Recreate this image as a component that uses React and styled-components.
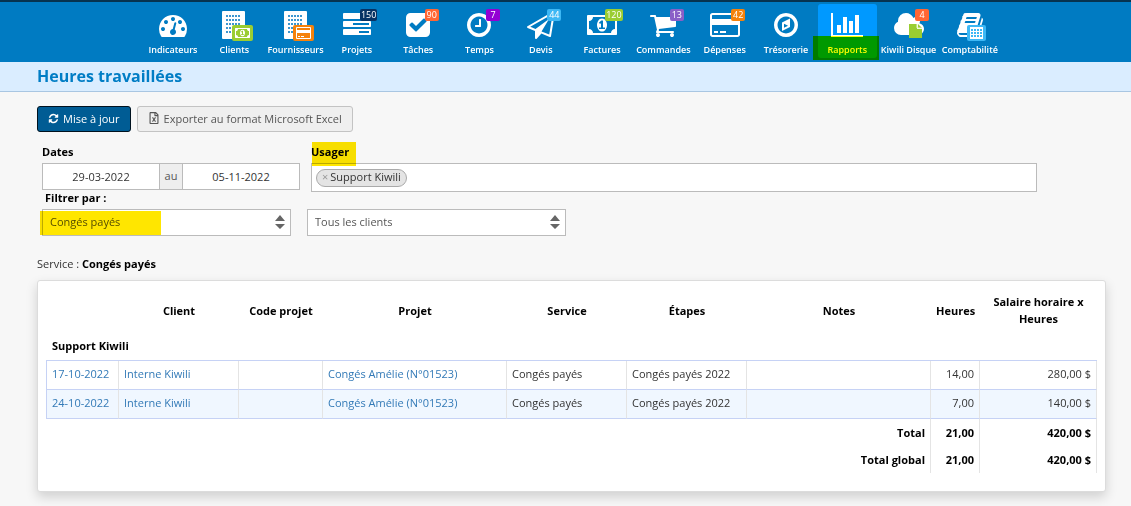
import React from "react";
import styled, { createGlobalStyle } from "styled-components";
import { FaRegFileExcel } from "react-icons/fa";

const GlobalStyle = createGlobalStyle`
  *, *::before, *::after { box-sizing: border-box; }
  body {
    margin: 0;
    background: #f7f7f7;
    color: #333;
    font: 11px/17px "Open Sans", "Noto Sans", sans-serif;
  }
  button, input, select { font: inherit; color: inherit; }
  a { color: #337ab7; text-decoration: none; }
`;

/* ---------- Glyphs ---------- */

const glyphs = {
  gauge: {
    w: 1792,
    d: "M384 1152q0-53-37.5-90.5t-90.5-37.5-90.5 37.5-37.5 90.5 37.5 90.5 90.5 37.5 90.5-37.5 37.5-90.5zm192-448q0-53-37.5-90.5t-90.5-37.5-90.5 37.5-37.5 90.5 37.5 90.5 90.5 37.5 90.5-37.5 37.5-90.5zm428 481l101-382q6-26-7.5-48.5t-38.5-29.5-48 6.5-30 39.5l-101 382q-60 5-107 43.5t-63 98.5q-20 77 20 146t117 89 146-20 89-117q16-60-6-117t-72-91zm660-33q0-53-37.5-90.5t-90.5-37.5-90.5 37.5-37.5 90.5 37.5 90.5 90.5 37.5 90.5-37.5 37.5-90.5zm-640-640q0-53-37.5-90.5t-90.5-37.5-90.5 37.5-37.5 90.5 37.5 90.5 90.5 37.5 90.5-37.5 37.5-90.5zm448 192q0-53-37.5-90.5t-90.5-37.5-90.5 37.5-37.5 90.5 37.5 90.5 90.5 37.5 90.5-37.5 37.5-90.5zm320 448q0 261-141 483-19 29-54 29h-1402q-35 0-54-29-141-221-141-483 0-182 71-348t191-286 286-191 348-71 348 71 286 191 191 286 71 348z",
  },
  tasks: {
    w: 1792,
    d: "M1024 1408h640v-128h-640v128zm-384-512h1024v-128h-1024v128zm640-512h384v-128h-384v128zm512 832v256q0 26-19 45t-45 19h-1664q-26 0-45-19t-19-45v-256q0-26 19-45t45-19h1664q26 0 45 19t19 45zm0-512v256q0 26-19 45t-45 19h-1664q-26 0-45-19t-19-45v-256q0-26 19-45t45-19h1664q26 0 45 19t19 45zm0-512v256q0 26-19 45t-45 19h-1664q-26 0-45-19t-19-45v-256q0-26 19-45t45-19h1664q26 0 45 19t19 45z",
  },
  check: {
    w: 1792,
    d: "M813 1299l614-614q19-19 19-45t-19-45l-102-102q-19-19-45-19t-45 19l-467 467-211-211q-19-19-45-19t-45 19l-102 102q-19 19-19 45t19 45l358 358q19 19 45 19t45-19zm851-883v960q0 119-84.5 203.5t-203.5 84.5h-960q-119 0-203.5-84.5t-84.5-203.5v-960q0-119 84.5-203.5t203.5-84.5h960q119 0 203.5 84.5t84.5 203.5z",
  },
  clock: {
    w: 1792,
    d: "M1024 544v448q0 14-9 23t-23 9h-320q-14 0-23-9t-9-23v-64q0-14 9-23t23-9h224v-352q0-14 9-23t23-9h64q14 0 23 9t9 23zm416 352q0-148-73-273t-198-198-273-73-273 73-198 198-73 273 73 273 198 198 273 73 273-73 198-198 73-273zm224 0q0 209-103 385.5t-279.5 279.5-385.5 103-385.5-103-279.5-279.5-103-385.5 103-385.5 279.5-279.5 385.5-103 385.5 103 279.5 279.5 103 385.5z",
  },
  plane: {
    w: 1792,
    d: "M1764 11q33 24 27 64l-256 1536q-5 29-32 45-14 8-31 8-11 0-24-5l-527-215-298 327q-18 21-47 21-14 0-23-4-19-7-30-23.5t-11-36.5v-452l-472-193q-37-14-40-55-3-39 32-59l1664-960q35-21 68 2zm-342 1499l221-1323-1434 827 336 137 863-639-478 797z",
  },
  money: {
    w: 1920,
    d: "M768 1152h384v-96h-128v-448h-114l-148 137 77 80q42-37 55-57h2v288h-128v96zm512-256q0 70-21 142t-59.5 134-101.5 101-138 39-138-39-101.5-101-59.5-134-21-142 21-142 59.5-134 101.5-101 138-39 138 39 101.5 101 59.5 134 21 142zm512 256v-512q-106 0-181-75t-75-181h-1152q0 106-75 181t-181 75v512q106 0 181 75t75 181h1152q0-106 75-181t181-75zm128-832v1152q0 26-19 45t-45 19h-1792q-26 0-45-19t-19-45v-1152q0-26 19-45t45-19h1792q26 0 45 19t19 45z",
  },
  cart: {
    w: 1792,
    d: "M704 1536q0 52-38 90t-90 38-90-38-38-90 38-90 90-38 90 38 38 90zm896 0q0 52-38 90t-90 38-90-38-38-90 38-90 90-38 90 38 38 90zm128-1088v512q0 24-16.5 42.5t-40.5 21.5l-1044 122q13 60 13 70 0 16-24 64h920q26 0 45 19t19 45-19 45-45 19h-1024q-26 0-45-19t-19-45q0-11 8-31.5t16-36 21.5-40 15.5-29.5l-177-823h-204q-26 0-45-19t-19-45 19-45 45-19h256q16 0 28.5 6.5t19.5 15.5 13 24.5 8 26 5.5 29.5 4.5 26h1201q26 0 45 19t19 45z",
  },
  card: {
    w: 1920,
    d: "M1760 128q66 0 113 47t47 113v1216q0 66-47 113t-113 47h-1600q-66 0-113-47t-47-113v-1216q0-66 47-113t113-47h1600zm-1600 128q-13 0-22.5 9.5t-9.5 22.5v224h1664v-224q0-13-9.5-22.5t-22.5-9.5h-1600zm1600 1280q13 0 22.5-9.5t9.5-22.5v-608h-1664v608q0 13 9.5 22.5t22.5 9.5h1600zm-1504-128v-128h256v128h-256zm384 0v-128h384v128h-384z",
  },
  compass: {
    w: 1792,
    d: "M768 1071l256-128-256-128v256zm384-591v542l-512 256v-542zm288 416q0-148-73-273t-198-198-273-73-273 73-198 198-73 273 73 273 198 198 273 73 273-73 198-198 73-273zm224 0q0 209-103 385.5t-279.5 279.5-385.5 103-385.5-103-279.5-279.5-103-385.5 103-385.5 279.5-279.5 385.5-103 385.5 103 279.5 279.5 103 385.5z",
  },
  chart: {
    w: 2048,
    d: "M640 896v512h-256v-512h256zm384-512v1024h-256v-1024h256zm1024 1152v128h-2048v-1536h128v1408h1920zm-640-896v768h-256v-768h256zm384-384v1152h-256v-1152h256z",
  },
  cloud: {
    w: 1920,
    d: "M1920 1152q0 159-112.5 271.5t-271.5 112.5h-1088q-185 0-316.5-131.5t-131.5-316.5q0-132 71-241.5t187-163.5q-2-28-2-43 0-212 150-362t362-150q158 0 286.5 88t187.5 230q70-62 166-62 106 0 181 75t75 181q0 75-41 138 129 30 213 134.5t84 239.5z",
  },
  book: {
    w: 1792,
    d: "M1703 478q40 57 18 129l-275 906q-19 64-76.5 107.5t-122.5 43.5h-923q-77 0-148.5-53.5t-99.5-131.5q-24-67-2-127 0-4 3-27t4-37q1-8-3-21.5t-3-19.5q2-11 8-21t16.5-23.5 16.5-23.5q23-38 45-91.5t30-91.5q3-10 .5-30t-.5-28q3-11 17-28t17-23q21-36 42-92t25-90q1-9-2.5-32t.5-28q4-13 22-30.5t22-22.5q19-26 42.5-84.5t27.5-96.5q1-8-3-25.5t-2-26.5q2-8 9-18t18-23 17-21q8-12 16.5-30.5t15-35 16-36 19.5-32 26.5-23.5 36-11.5 47.5 5.5l-1 3q38-9 51-9h761q74 0 114 56t18 130l-274 906q-36 119-71.5 153.5t-128.5 34.5h-869q-27 0-38 15-11 16-1 43 24 70 144 70h923q29 0 56-15.5t35-41.5l300-987q7-22 5-57 38 15 59 43zm-1064 2q-4 13 2 22.5t20 9.5h608q13 0 25.5-9.5t16.5-22.5l21-64q4-13-2-22.5t-20-9.5h-608q-13 0-25.5 9.5t-16.5 22.5zm-83 256q-4 13 2 22.5t20 9.5h608q13 0 25.5-9.5t16.5-22.5l21-64q4-13-2-22.5t-20-9.5h-608q-13 0-25.5 9.5t-16.5 22.5z",
  },
  refresh: {
    w: 1792,
    d: "M1639 1056q0 5-1 7-64 268-268 434.5t-478 166.5q-146 0-282.5-55t-243.5-157l-129 129q-19 19-45 19t-45-19-19-45v-448q0-26 19-45t45-19h448q26 0 45 19t19 45-19 45l-137 137q71 66 161 102t187 36q134 0 250-65t186-179q11-17 53-117 8-23 30-23h192q13 0 22.5 9.5t9.5 22.5zm25-800v448q0 26-19 45t-45 19h-448q-26 0-45-19t-19-45 19-45l138-138q-148-137-349-137-134 0-250 65t-186 179q-11 17-53 117-8 23-30 23h-199q-13 0-22.5-9.5t-9.5-22.5v-7q65-268 270-434.5t480-166.5q146 0 284 55.5t245 156.5l130-129q19-19 45-19t45 19 19 45z",
  },
};

function Glyph({ name, size }) {
  const { w, d } = glyphs[name];
  return (
    <svg width={(size * w) / 1792} height={size} viewBox={`0 0 ${w} 1792`} fill="currentColor" aria-hidden="true">
      <path fillRule="evenodd" d={d} />
    </svg>
  );
}

function Building() {
  const dots = [];
  for (let r = 0; r < 5; r++)
    for (let c = 0; c < 5; c++)
      dots.push(<rect key={`${r}-${c}`} x={6 + c * 3} y={4 + r * 4} width="2" height="2" fill="#3c96cf" />);
  return (
    <svg width="28" height="28" viewBox="0 0 28 28" aria-hidden="true">
      <rect x="2" width="23" height="28" rx="1" fill="#fff" />
      {dots}
    </svg>
  );
}

function MiniCard() {
  return (
    <svg width="15" height="12" viewBox="0 0 15 12" aria-hidden="true">
      <path fill="#fff" fillRule="evenodd" d="M1 0h13a1 1 0 0 1 1 1v10a1 1 0 0 1-1 1H1a1 1 0 0 1-1-1V1a1 1 0 0 1 1-1zM1 1v2h13V1zM1 6v5h13V6z" />
      <path fill="#fff" d="M2 9h2v1H2zM5 9h3v1H5z" />
    </svg>
  );
}

function MiniGrid() {
  return (
    <svg width="13" height="12" viewBox="0 0 13 12" aria-hidden="true">
      <path fill="#fff" fillRule="evenodd" d="M0 0h13v12H0zM1 2v2h2V2zM4 2v2h2V2zM7 2v2h2V2zM10 2v2h2V2zM1 5v2h2V5zM4 5v2h2V5zM7 5v2h2V5zM10 5v2h2V5zM1 8v2h2V8zM4 8v2h2V8zM7 8v2h2V8zM10 8v2h2V8z" />
    </svg>
  );
}

function MiniFile() {
  return (
    <svg width="13" height="14" viewBox="0 0 13 14" aria-hidden="true">
      <path fill="#9acd32" d="M0 0h8v5h5v9H0z" />
      <path fill="#9acd32" d="M9 0l4 4H9z" />
      <path fill="none" stroke="#e6f4c8" d="M8 0v4h5" />
    </svg>
  );
}

/* ---------- Top navigation ---------- */

const TopBar = styled.nav`
  background: #007bc2;
  border-top: 2px solid #06334f;
  padding: 2px 0 4px 12px;
`;

const NavList = styled.ul`
  list-style: none;
  max-width: 856px;
  margin: 0 auto;
  padding: 0;
  display: flex;
  justify-content: space-between;
`;

const NavLink = styled.a`
  position: relative;
  display: flex;
  flex-direction: column;
  align-items: center;
  width: 59px;
  height: 54px;
  padding-top: 7px;
  gap: 4px;
  border-radius: 3px;
  color: #fff;
  background: ${(p) => (p.$active ? "#0099ff" : "transparent")};
`;

const NavLabel = styled.span`
  font-size: 9px;
  line-height: 14px;
  font-weight: 600;
  white-space: nowrap;
`;

const Count = styled.span`
  position: absolute;
  top: 5px;
  right: 9px;
  min-width: 14px;
  height: 12px;
  padding: 0 1px;
  border-radius: 2px;
  background: ${(p) => p.$color};
  font-size: 9px;
  line-height: 12px;
  text-align: center;
`;

const Overlay = styled.span`
  position: absolute;
  top: ${(p) => (p.$bare ? 19 : 21)}px;
  left: ${(p) => (p.$bare ? 30 : 27)}px;
  min-width: ${(p) => (p.$bare ? 13 : 19)}px;
  height: 16px;
  padding: ${(p) => (p.$bare ? 0 : "0 3px")};
  display: flex;
  align-items: center;
  justify-content: center;
  border-radius: 2px;
  background: ${(p) => p.$color || "transparent"};
`;

const Marker = styled.span`
  position: absolute;
  top: ${(p) => p.$top}px;
  left: ${(p) => p.$left}px;
  width: ${(p) => p.$width}px;
  height: 24px;
  background: ${(p) => p.$color || "#ffe600"};
  mix-blend-mode: multiply;
  pointer-events: none;
`;

const navItems = [
  { label: "Indicateurs", icon: "gauge" },
  { label: "Clients", icon: "building", overlay: ["#9acd32", <Glyph name="money" size={14} />] },
  { label: "Fournisseurs", icon: "building", overlay: ["#f5820b", <MiniCard />] },
  { label: "Projets", icon: "tasks", count: "150", color: "#063264" },
  { label: "Tâches", icon: "check", count: "90", color: "#ff6633" },
  { label: "Temps", icon: "clock", count: "7", color: "#9400d3" },
  { label: "Devis", icon: "plane", count: "44", color: "#3db8f5" },
  { label: "Factures", icon: "money", count: "120", color: "#9acd32" },
  { label: "Commandes", icon: "cart", count: "13", color: "#8a5fc7" },
  { label: "Dépenses", icon: "card", count: "42", color: "#f5820b" },
  { label: "Trésorerie", icon: "compass" },
  { label: "Rapports", icon: "chart", active: true },
  { label: "Kiwili Disque", icon: "cloud", count: "4", color: "#ff6633", overlay: [null, <MiniFile />] },
  { label: "Comptabilité", icon: "book", overlay: ["#3db8f5", <MiniGrid />] },
];

/* ---------- Page ---------- */

const TitleBar = styled.header`
  background: #daedff;
  border-bottom: 1px solid #a9c6e2;
  padding: 0 37px;
`;

const Title = styled.h1`
  margin: 0;
  font-size: 16px;
  line-height: 29px;
  font-weight: 700;
  color: #007dc5;
`;

const Content = styled.main`
  padding: 14px 25px 14px 37px;
`;

const Actions = styled.div`
  display: flex;
  gap: 6px;
`;

const Button = styled.button`
  display: flex;
  align-items: center;
  gap: 4px;
  height: 26px;
  padding: 0 10px 2px;
  border: 1px solid ${(p) => (p.$primary ? "#00121f" : "#c3c3c3")};
  border-radius: 3px;
  background: ${(p) => (p.$primary ? "#005c94" : "#efefef")};
  color: ${(p) => (p.$primary ? "#fff" : "#555")};
`;

const Filters = styled.form`
  padding: 11px 69px 0 5px;
`;

const FieldRow = styled.div`
  display: flex;
  align-items: flex-start;
  gap: ${(p) => p.$gap}px;
`;

const Field = styled.div`
  position: relative;
  flex: ${(p) => (p.$grow ? "1" : "none")};
`;

const Label = styled.label`
  display: block;
  margin-bottom: 3px;
  font-weight: 700;
  color: #000;
`;

const FilterLabel = styled.div`
  padding-left: 3px;
  margin-bottom: 6px;
  line-height: 11px;
  font-weight: 700;
  color: #000;
`;

const DateRange = styled.div`
  display: flex;
  height: 27px;
`;

const DateInput = styled.input`
  width: 118px;
  border: 1px solid #bbb;
  background: #fff;
  padding: 0 6px;
  text-align: center;
`;

const Addon = styled.span`
  width: 22px;
  border: solid #bbb;
  border-width: 1px 0;
  background: #eee;
  line-height: 24px;
  text-align: center;
  color: #555;
`;

const TagField = styled.div`
  display: flex;
  align-items: center;
  height: 29px;
  padding: 0 4px;
  border: 1px solid #bbb;
  background: #fff;
`;

const Tag = styled.span`
  display: flex;
  align-items: center;
  gap: 2px;
  height: 18px;
  padding: 0 5px 2px;
  border: 1px solid #aaa;
  border-radius: 9px;
  background: #e4e4e4;
`;

const TagRemove = styled.button`
  border: 0;
  padding: 0;
  background: none;
  color: #999;
  line-height: 16px;
`;

const TagInput = styled.input`
  flex: 1;
  min-width: 0;
  border: 0;
  outline: 0;
  background: transparent;
`;

const SelectBox = styled.div`
  position: relative;
  width: ${(p) => p.$width}px;
  svg {
    position: absolute;
    right: 6px;
    top: 6px;
    pointer-events: none;
  }
`;

const Select = styled.select`
  appearance: none;
  display: block;
  width: 100%;
  height: 27px;
  padding: 0 24px 2px 7px;
  border: 1px solid #bbb;
  border-radius: 0;
  background: #fff;
  color: #555;
`;

const Summary = styled.p`
  margin: 19px 0 8px;
  strong { color: #000; }
`;

const Card = styled.section`
  padding: 8px 8px 18px;
  border: 1px solid #dcdcdc;
  border-radius: 3px;
  background: #fff;
  box-shadow: 0 5px 12px rgba(0, 0, 0, 0.16);
`;

const Table = styled.table`
  width: 100%;
  table-layout: fixed;
  border-collapse: separate;
  border-spacing: 0;
`;

const HeadCell = styled.th`
  height: 44px;
  padding: 0 5px 2px;
  color: #000;
`;

const GroupCell = styled.th`
  height: 28px;
  padding: 0 6px 2px;
  border-bottom: 1px solid #c6d2f5;
  text-align: left;
  color: #000;
`;

const DataRow = styled.tr`
  background: ${(p) => (p.$alt ? "#f0f7ff" : "#fff")};
`;

const Cell = styled.td`
  height: 29px;
  padding: 0 5px 4px;
  border-right: 1px solid #e4e4e4;
  border-bottom: 1px solid #c6d2f5;
  text-align: ${(p) => (p.$num ? "right" : "left")};
  &:first-child { border-left: 1px solid #c6d2f5; }
`;

const TotalCell = styled.td`
  height: 27px;
  padding: 0 5px;
  border-right: 1px solid #e4e4e4;
  text-align: right;
  font-weight: 700;
  color: #000;
`;

const columns = [
  { title: "", width: 73 },
  { title: "Client", width: 120 },
  { title: "Code projet", width: 84 },
  { title: "Projet" },
  { title: "Service", width: 120 },
  { title: "Étapes", width: 120 },
  { title: "Notes" },
  { title: "Heures", width: 49 },
  { title: "Salaire horaire x Heures", width: 117 },
];

const rows = [
  { date: "17-10-2022", hours: "14,00", amount: "280,00 $" },
  { date: "24-10-2022", hours: "7,00", amount: "140,00 $" },
];

const totals = ["Total", "Total global"];

function SortArrows() {
  return (
    <svg width="10" height="14" viewBox="0 0 10 14" fill="#666" aria-hidden="true">
      <path d="M5 0l5 6H0zM5 14l5-5H0z" />
    </svg>
  );
}

export default function App() {
  return (
    <>
      <GlobalStyle />
      <TopBar>
        <NavList>
          {navItems.map((item) => (
            <li key={item.label}>
              <NavLink href="#" $active={item.active}>
                {item.icon === "building" ? <Building /> : <Glyph name={item.icon} size={28} />}
                {item.overlay && (
                  <Overlay $color={item.overlay[0]} $bare={!item.overlay[0]}>
                    {item.overlay[1]}
                  </Overlay>
                )}
                {item.count && <Count $color={item.color}>{item.count}</Count>}
                <NavLabel>{item.label}</NavLabel>
                {item.active && <Marker $top={32} $left={-5} $width={66} $color="#ffff00" />}
              </NavLink>
            </li>
          ))}
        </NavList>
      </TopBar>
      <TitleBar>
        <Title>Heures travaillées</Title>
      </TitleBar>
      <Content>
        <Actions>
          <Button type="button" $primary>
            <Glyph name="refresh" size={11} />
            Mise à jour
          </Button>
          <Button type="button">
            <FaRegFileExcel size={12} aria-hidden="true" />
            Exporter au format Microsoft Excel
          </Button>
        </Actions>
        <Filters>
          <FieldRow $gap={11}>
            <Field>
              <Label htmlFor="from">Dates</Label>
              <DateRange>
                <DateInput id="from" defaultValue="29-03-2022" />
                <Addon>au</Addon>
                <DateInput aria-label="Date de fin" defaultValue="05-11-2022" />
              </DateRange>
            </Field>
            <Field $grow>
              <Label htmlFor="user">Usager</Label>
              <TagField>
                <Tag>
                  <TagRemove type="button">×</TagRemove>
                  Support Kiwili
                </Tag>
                <TagInput id="user" />
              </TagField>
              <Marker $top={-1} $left={1} $width={44} />
            </Field>
          </FieldRow>
          <FilterLabel>Filtrer par :</FilterLabel>
          <FieldRow $gap={16}>
            <SelectBox $width={249}>
              <Select aria-label="Service">
                <option>Congés payés</option>
              </Select>
              <SortArrows />
              <Marker $top={2} $left={-2} $width={121} />
            </SelectBox>
            <SelectBox $width={259}>
              <Select aria-label="Client">
                <option>Tous les clients</option>
              </Select>
              <SortArrows />
            </SelectBox>
          </FieldRow>
        </Filters>
        <Summary>
          Service : <strong>Congés payés</strong>
        </Summary>
        <Card>
          <Table>
            <colgroup>
              {columns.map((c, i) => (
                <col key={i} width={c.width} />
              ))}
            </colgroup>
            <thead>
              <tr>
                {columns.map((c, i) => (
                  <HeadCell key={i} scope="col">{c.title}</HeadCell>
                ))}
              </tr>
            </thead>
            <tbody>
              <tr>
                <GroupCell colSpan={9}>Support Kiwili</GroupCell>
              </tr>
              {rows.map((r, i) => (
                <DataRow key={r.date} $alt={i % 2 === 1}>
                  <Cell><a href="#">{r.date}</a></Cell>
                  <Cell><a href="#">Interne Kiwili</a></Cell>
                  <Cell />
                  <Cell><a href="#">Congés Amélie (N°01523)</a></Cell>
                  <Cell>Congés payés</Cell>
                  <Cell>Congés payés 2022</Cell>
                  <Cell />
                  <Cell $num>{r.hours}</Cell>
                  <Cell $num>{r.amount}</Cell>
                </DataRow>
              ))}
            </tbody>
            <tfoot>
              {totals.map((t) => (
                <tr key={t}>
                  <TotalCell colSpan={7}>{t}</TotalCell>
                  <TotalCell>21,00</TotalCell>
                  <TotalCell>420,00 $</TotalCell>
                </tr>
              ))}
            </tfoot>
          </Table>
        </Card>
      </Content>
    </>
  );
}
